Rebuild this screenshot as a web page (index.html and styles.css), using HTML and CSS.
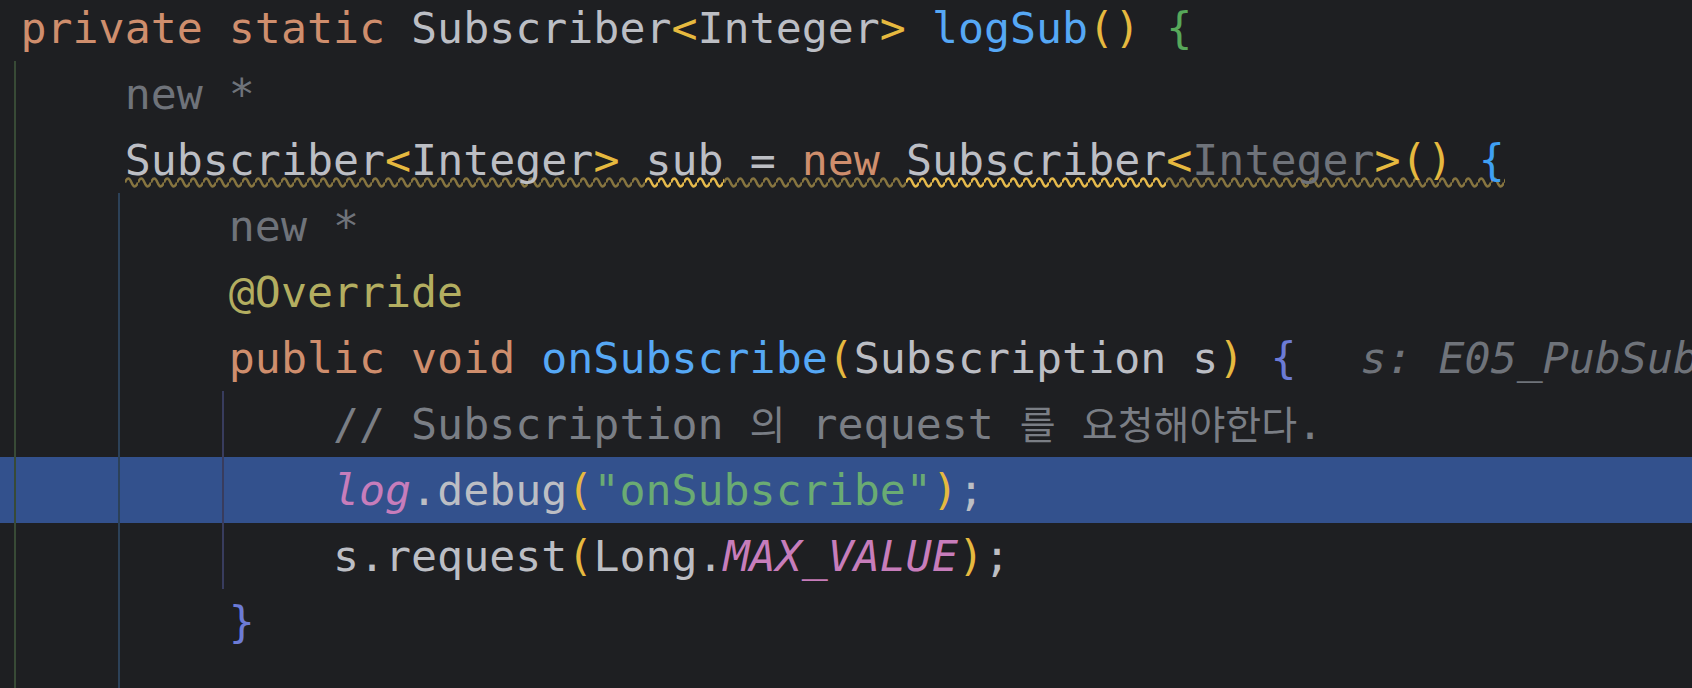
FILE: index.html
```html
<!DOCTYPE html>
<html lang="ko">
<head>
<meta charset="utf-8">
<title>Editor</title>
<link rel="stylesheet" href="styles.css">
</head>
<body>
<div class="editor">
  <div class="line"><span class="kw">private static</span> Subscriber<span class="y">&lt;</span>Integer<span class="y">&gt;</span> <span class="fn">logSub</span><span class="y">()</span> <span class="bg">{</span></div>
  <div class="line">    <span class="hint">new *</span></div>
  <div class="line">    <span class="wv">Subscriber<span class="y">&lt;</span>Integer<span class="y">&gt;</span> </span><span class="wv hi">sub</span><span class="wv"> = <span class="kw">new</span> </span><span class="wv hi">Subscriber</span><span class="wv"><span class="y">&lt;</span><span class="dim">Integer</span><span class="y">&gt;()</span> <span class="bb">{</span></span></div>
  <div class="line">        <span class="hint">new *</span></div>
  <div class="line">        <span class="ann">@Override</span></div>
  <div class="line">        <span class="kw">public void</span> <span class="fn">onSubscribe</span><span class="y">(</span>Subscription s<span class="y">)</span> <span class="bi">{</span><span class="inlay">s: E05_PubSub$1$1@812</span></div>
  <div class="line">            <span class="cm">// Subscription <span class="ko">의</span> request <span class="ko">를</span> <span class="ko">요청해야한다</span>.</span></div>
  <div class="line hl">            <span class="pu it">log</span>.debug<span class="y">(</span><span class="str">"onSubscribe"</span><span class="y">)</span>;</div>
  <div class="line">            s.request<span class="y">(</span>Long.<span class="pu it">MAX_VALUE</span><span class="y">)</span>;</div>
  <div class="line">        <span class="bi">}</span></div>
  <div class="line"></div>
  <div class="guide g1"></div>
  <div class="guide g2"></div>
  <div class="guide g3"></div>
</div>
</body>
</html>
```

FILE: styles.css
```css
html, body {
  margin: 0;
  padding: 0;
  background: #1e1f22;
  overflow: hidden;
}

.editor {
  position: relative;
  margin-top: -5.5px;
  height: 700px;
  overflow: hidden;
  font-family: "DejaVu Sans Mono", monospace;
  font-size: 43.25px;
  color: #bcbec4;
}

.line {
  height: 66px;
  line-height: 66px;
  padding-left: 20.5px;
  white-space: pre;
}

.line.hl {
  background: #33518d;
}

.kw { color: #cf8e6d; }
.fn { color: #56a8f5; }
.y { color: #e6b93f; }
.bg { color: #57a85a; }
.bb { color: #3fa0f3; }
.bi { color: #6c7bd6; }
.hint { color: #6f737a; }
.dim { color: #6f737a; }
.ann { color: #b3ae60; }
.cm { color: #7a7e85; }
.pu { color: #c77dbb; }
.it { font-style: italic; }
.str { color: #6aab73; }

.ko {
  font-family: "Noto Sans CJK KR", sans-serif;
  font-size: 39px;
  line-height: 40px;
}

.inlay {
  color: #6f737a;
  font-style: italic;
  margin-left: 64px;
}

.wv {
  padding-bottom: 3px;
  background-image: url("data:image/svg+xml,%3Csvg xmlns='http://www.w3.org/2000/svg' width='13' height='11'%3E%3Cpath d='M0 5.5Q3.25 -2.5 6.5 5.5T13 5.5' fill='none' stroke='%23877540' stroke-width='2.4'/%3E%3C/svg%3E");
  background-repeat: repeat-x;
  background-size: 13px 11px;
  background-position: 0 100%;
}

.wv.hi {
  background-image: url("data:image/svg+xml,%3Csvg xmlns='http://www.w3.org/2000/svg' width='13' height='11'%3E%3Cpath d='M0 5.5Q3.25 -2.5 6.5 5.5T13 5.5' fill='none' stroke='%23e6ba4c' stroke-width='2.4'/%3E%3C/svg%3E");
}

.guide {
  position: absolute;
  width: 2px;
}

.g1 {
  left: 14px;
  top: 66px;
  bottom: 0;
  background: #384a36;
}

.g2 {
  left: 118px;
  top: 198px;
  bottom: 0;
  background: #2c4158;
}

.g3 {
  left: 222px;
  top: 396px;
  height: 198px;
  background: #383c5e;
}
```
